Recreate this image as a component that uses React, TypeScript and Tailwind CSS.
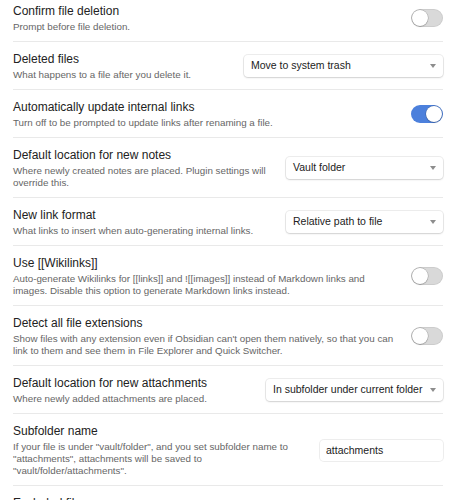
import React from 'react';

type Control =
  | { kind: 'toggle'; on: boolean }
  | { kind: 'select'; value: string; width: string }
  | { kind: 'text'; value: string };

interface Setting {
  name: string;
  desc: string[];
  control?: Control;
}

const settings: Setting[] = [
  { name: 'Confirm file deletion', desc: ['Prompt before file deletion.'], control: { kind: 'toggle', on: false } },
  {
    name: 'Deleted files',
    desc: ['What happens to a file after you delete it.'],
    control: { kind: 'select', value: 'Move to system trash', width: 'w-[199px]' },
  },
  {
    name: 'Automatically update internal links',
    desc: ['Turn off to be prompted to update links after renaming a file.'],
    control: { kind: 'toggle', on: true },
  },
  {
    name: 'Default location for new notes',
    desc: ['Where newly created notes are placed. Plugin settings will', 'override this.'],
    control: { kind: 'select', value: 'Vault folder', width: 'w-[157px]' },
  },
  {
    name: 'New link format',
    desc: ['What links to insert when auto-generating internal links.'],
    control: { kind: 'select', value: 'Relative path to file', width: 'w-[157px]' },
  },
  {
    name: 'Use [[Wikilinks]]',
    desc: [
      'Auto-generate Wikilinks for [[links]] and ![[images]] instead of Markdown links and',
      'images. Disable this option to generate Markdown links instead.',
    ],
    control: { kind: 'toggle', on: false },
  },
  {
    name: 'Detect all file extensions',
    desc: [
      "Show files with any extension even if Obsidian can't open them natively, so that you can",
      'link to them and see them in File Explorer and Quick Switcher.',
    ],
    control: { kind: 'toggle', on: false },
  },
  {
    name: 'Default location for new attachments',
    desc: ['Where newly added attachments are placed.'],
    control: { kind: 'select', value: 'In subfolder under current folder', width: 'w-[177px]' },
  },
  {
    name: 'Subfolder name',
    desc: [
      'If your file is under "vault/folder", and you set subfolder name to',
      '"attachments", attachments will be saved to',
      '"vault/folder/attachments".',
    ],
    control: { kind: 'text', value: 'attachments' },
  },
  { name: 'Excluded files', desc: ['Excluded files will be hidden in Quick Switcher.'] },
];

const Toggle: React.FC<{ on: boolean }> = ({ on }) => (
  <div
    className={`relative h-[18px] w-[32px] shrink-0 rounded-full ${
      on ? 'bg-[#4c80dc]' : 'bg-[#d9d9d9] shadow-[inset_0_0_0_1px_rgba(0,0,0,0.06)]'
    }`}
  >
    <div
      className={`absolute top-[1px] h-[16px] w-[16px] rounded-full bg-white shadow-[0_0_0_0.5px_rgba(0,0,0,0.25),0_1px_1px_rgba(0,0,0,0.15)] ${
        on ? 'right-[1px]' : 'left-[1px]'
      }`}
    />
  </div>
);

const Dropdown: React.FC<{ value: string; width: string }> = ({ value, width }) => (
  <div
    className={`flex h-[22px] shrink-0 items-center justify-between rounded-[4px] bg-white pl-[7px] pr-[7px] text-[10.5px] text-[#222] shadow-[0_0_0_1px_rgba(0,0,0,0.07),0_1px_2px_rgba(0,0,0,0.12)] ${width}`}
  >
    <span className="whitespace-nowrap">{value}</span>
    <svg width="6" height="4" viewBox="0 0 6 4" className="ml-1 shrink-0">
      <path d="M0 0h6L3 4z" fill="#8d8d8d" />
    </svg>
  </div>
);

export default function App() {
  return (
    <div className="min-h-screen overflow-hidden bg-white pl-[13px] pr-[11px] font-['Liberation_Sans',Arial,sans-serif] antialiased">
      <div className="-mt-[6px]">
        {settings.map(s => (
          <div key={s.name} className="flex items-center gap-4 border-b border-[#e9e9e9] pt-[9px] pb-[8px]">
            <div className="min-w-0 flex-1">
              <div className="text-[12px] leading-[16px] text-[#222]">{s.name}</div>
              <div className="mt-[2px] whitespace-nowrap text-[9.8px] leading-[12px] text-[#666]">
                {s.desc.map((line, i) => (
                  <div key={i}>{line}</div>
                ))}
              </div>
            </div>
            {s.control?.kind === 'toggle' && <Toggle on={s.control.on} />}
            {s.control?.kind === 'select' && <Dropdown value={s.control.value} width={s.control.width} />}
            {s.control?.kind === 'text' && (
              <input
                readOnly
                value={s.control.value}
                className="h-[21px] w-[123px] shrink-0 rounded-[4px] bg-white px-[6px] text-[10.5px] text-[#222] shadow-[0_0_0_1px_rgba(0,0,0,0.07)] outline-none"
              />
            )}
          </div>
        ))}
      </div>
    </div>
  );
}
